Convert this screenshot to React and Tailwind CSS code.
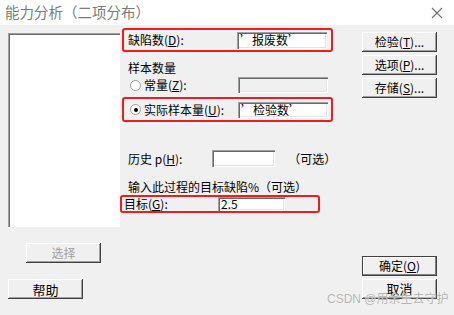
import React from "react";

const font = { fontFamily: '"Noto Sans CJK SC", "Liberation Sans", sans-serif' };

function Btn({ children, className = "", disabled = false, def = false }) {
  return (
    <div
      className={
        "flex items-center justify-center w-[75px] h-[20px] bg-[#f0f0f0] text-[12px] leading-none " +
        (def
          ? "border border-[#404040] shadow-[inset_-1px_-1px_#808080,inset_1px_1px_#ffffff] "
          : "shadow-[inset_-1px_-1px_#404040,inset_1px_1px_#ffffff,inset_-2px_-2px_#a0a0a0] ") +
        (disabled ? "text-[#a0a0a0] " : "text-black ") +
        className
      }
    >
      {children}
    </div>
  );
}

function Input({ className = "", children, disabled = false }) {
  return (
    <div
      className={
        "flex items-center px-[3px] text-[12px] leading-none text-black shadow-[inset_1px_1px_#a0a0a0,inset_2px_2px_#696969,inset_-1px_-1px_#ffffff,inset_-2px_-2px_#e3e3e3] " +
        (disabled ? "bg-[#f0f0f0] " : "bg-white ") +
        className
      }
    >
      {children}
    </div>
  );
}

function Radio({ checked }) {
  return (
    <div className="w-[11px] h-[11px] rounded-full bg-white border border-[#9a9a9a] flex items-center justify-center shrink-0">
      {checked && <div className="w-[4px] h-[4px] rounded-full bg-black" />}
    </div>
  );
}

export default function App() {
  return (
    <div className="w-[454px] h-[315px] overflow-hidden relative bg-[#f0f0f0]" style={font}>
      {/* title bar */}
      <div className="h-[25px] bg-white flex items-center justify-between pl-[5px] pr-[11px]">
        <span className="text-[14.5px] text-[#7a7a7a] leading-none">能力分析（二项分布）</span>
        <svg width="12" height="12" viewBox="0 0 12 12">
          <path d="M1 1L11 11M11 1L1 11" stroke="#707070" strokeWidth="1.1" />
        </svg>
      </div>

      {/* body */}
      <div className="flex h-[290px] text-[12px] text-black">
        {/* left column */}
        <div className="w-[120px] flex flex-col">
          <div className="mt-[8px] ml-[8px] w-[112px] h-[194px] bg-white shadow-[inset_1px_1px_#a0a0a0,inset_2px_2px_#696969]" />
          <Btn disabled className="mt-[16px] ml-[26px] w-[74px]">选择</Btn>
          <Btn className="mt-[16px] ml-[8px] w-[74px] text-[13px]">帮助</Btn>
        </div>

        {/* middle column */}
        <div className="w-[213px] flex flex-col">
          <div className="mt-[3px] ml-[2px] w-[211px] h-[24px] border-2 border-[#ee1c1c] rounded-[3px] flex items-center pl-[4px]">
            <span className="w-[109px] leading-none">缺陷数(<u>D</u>):</span>
            <Input className="w-[90px] h-[17px]">’报废数’</Input>
          </div>

          <div className="mt-[9px] ml-[8px] h-[14px] leading-[14px]">样本数量</div>

          <div className="mt-[2px] ml-[8px] h-[16px] flex items-center">
            <div className="ml-[2px]"><Radio /></div>
            <span className="ml-[3px] w-[94px] leading-none">常量(<u>Z</u>):</span>
            <Input disabled className="w-[90px] h-[16px]" />
          </div>

          <div className="mt-[4px] ml-[2px] w-[211px] h-[25px] border-2 border-[#ee1c1c] rounded-[3px] flex items-center pl-[4px]">
            <div className="ml-[2px]"><Radio checked /></div>
            <span className="ml-[3px] w-[94px] leading-none whitespace-nowrap">实际样本量(<u>U</u>):</span>
            <Input className="w-[90px] h-[16px]">’检验数’</Input>
          </div>

          <div className="mt-[28px] ml-[8px] h-[17px] flex items-center">
            <span className="w-[90px] leading-none">历史 p(<u>H</u>):</span>
            <Input className="w-[67px] h-[17px]" />
            <span className="ml-[13px] leading-none">（可选）</span>
          </div>

          <div className="mt-[13px] ml-[8px] h-[14px] leading-[14px] whitespace-nowrap">输入此过程的目标缺陷%（可选）</div>

          <div className="mt-[1px] w-[200px] h-[18px] border-2 border-[#ee1c1c] rounded-[3px] flex items-center pl-[2px]">
            <span className="w-[94px] leading-none">目标(<u>G</u>):</span>
            <Input className="w-[67px] h-[14px]">2.5</Input>
          </div>
        </div>

        {/* right column */}
        <div className="flex flex-col pl-[29px]">
          <Btn className="mt-[7px]">检验(<u>T</u>)...</Btn>
          <Btn className="mt-[3px]">选项(<u>P</u>)...</Btn>
          <Btn className="mt-[3px]">存储(<u>S</u>)...</Btn>
          <Btn def className="mt-[158px]">确定(<u>O</u>)</Btn>
          <Btn className="mt-[3px] text-[13px] items-start pt-[3px]">取消</Btn>
        </div>
      </div>

      {/* watermark */}
      <div className="absolute left-[327px] top-[293px] text-[12px] text-[#b4b4b4] leading-none [text-shadow:0_0_1px_#ffffff]" style={{ fontFamily: '"Liberation Sans", "Noto Sans CJK SC", sans-serif' }}>
        CSDN @用余生去守护
      </div>
    </div>
  );
}
